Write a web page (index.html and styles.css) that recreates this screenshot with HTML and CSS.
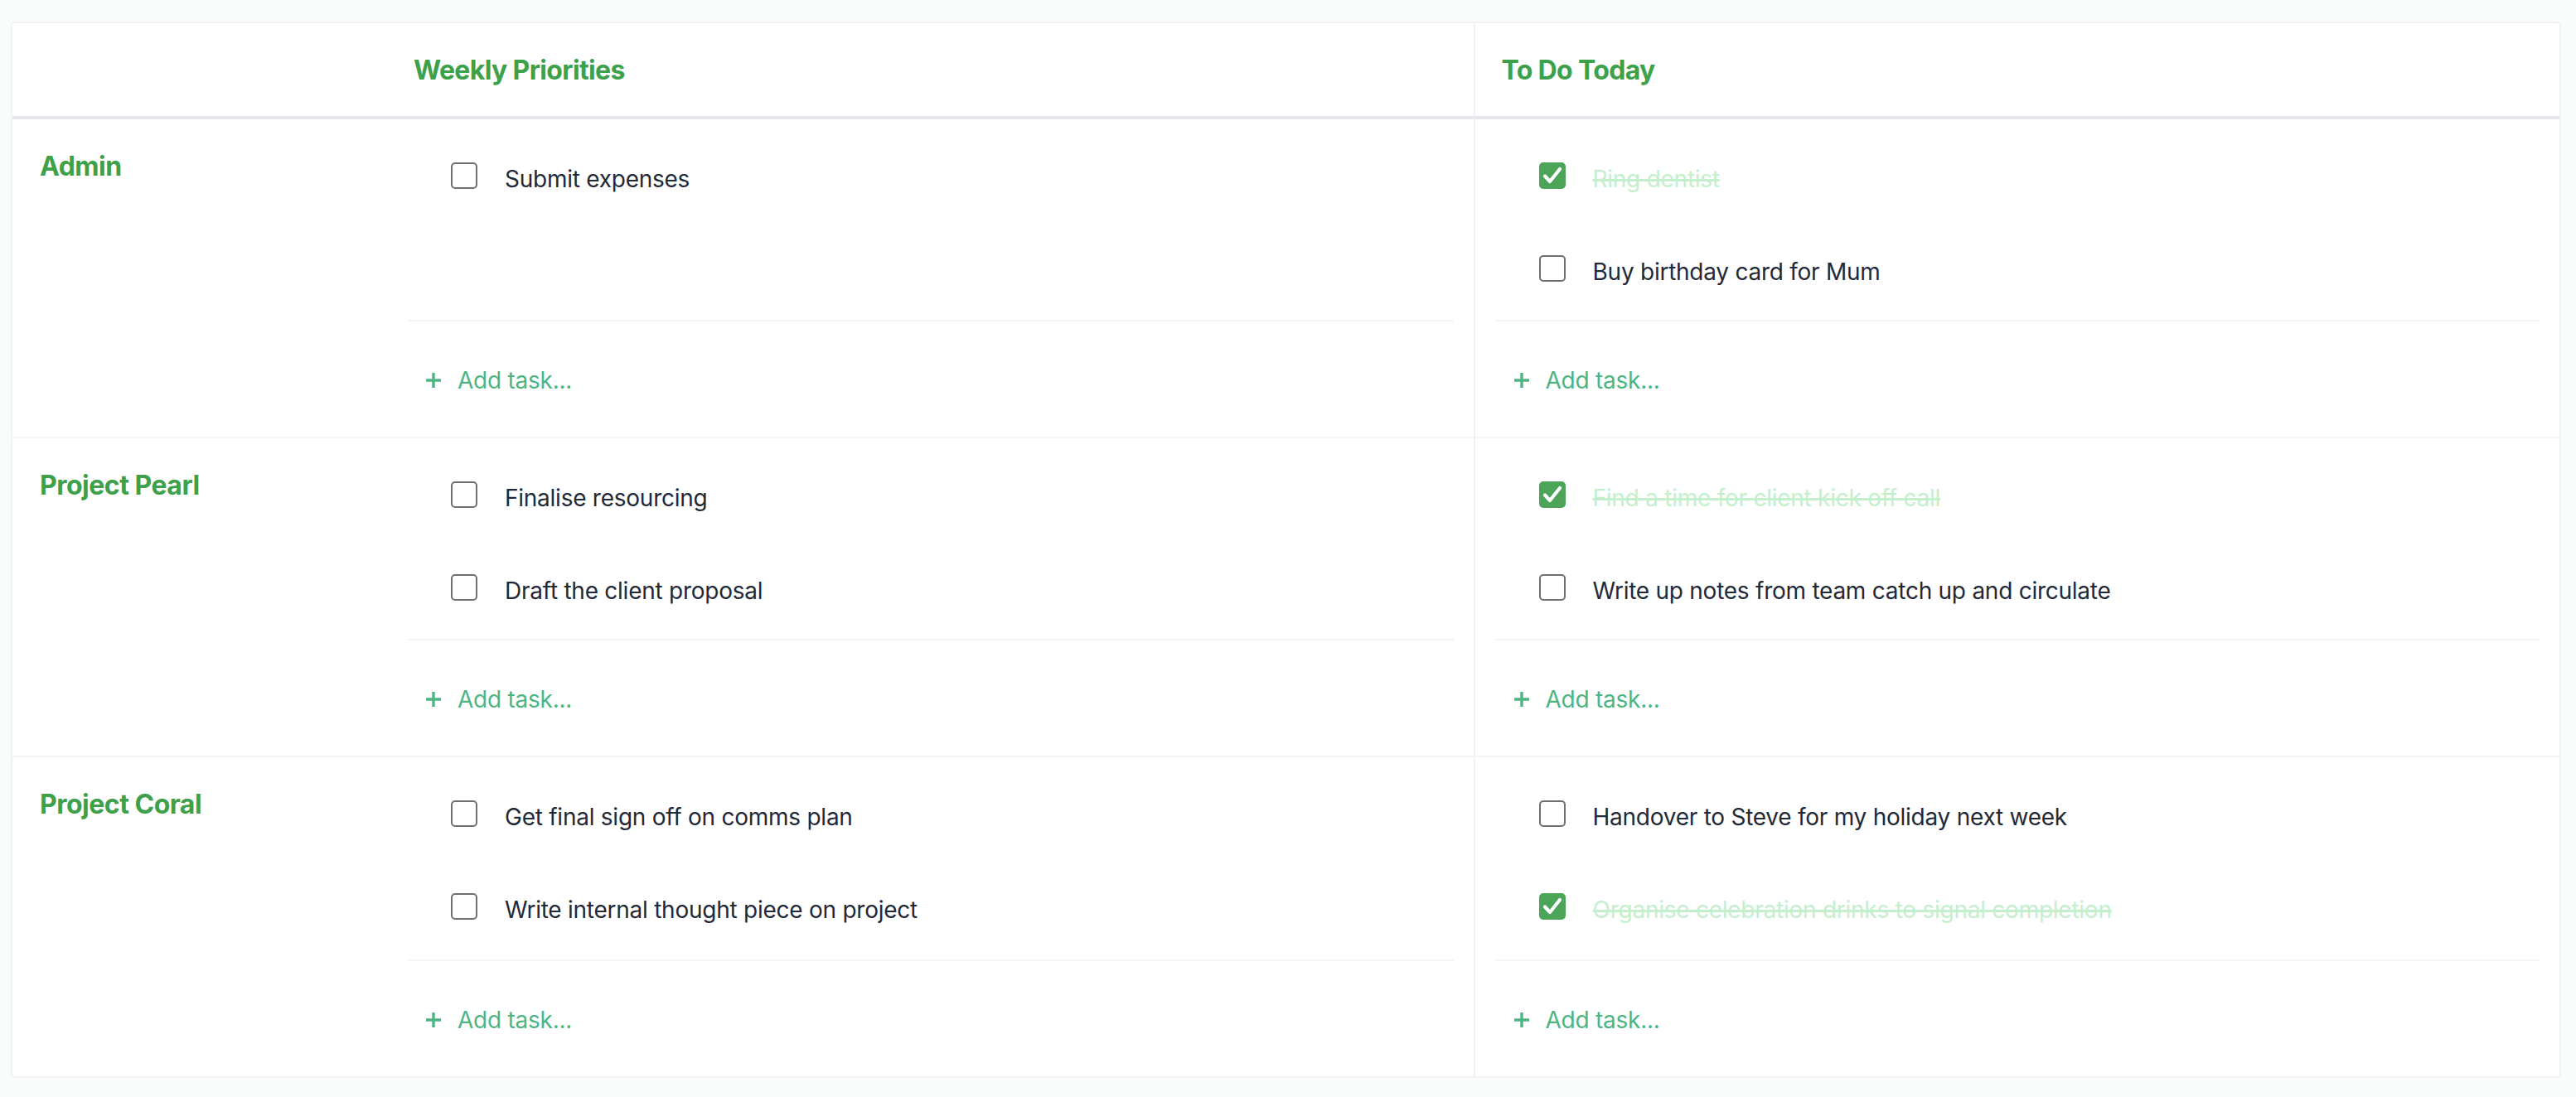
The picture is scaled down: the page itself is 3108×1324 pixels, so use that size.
FILE: index.html
```html
<!DOCTYPE html>
<html lang="en">
<head>
<meta charset="utf-8">
<title>Weekly planner</title>
<link rel="stylesheet" href="styles.css">
</head>
<body>
<div class="board">
  <div class="grid">
    <div class="head head-label"></div>
    <div class="head">Weekly Priorities</div>
    <div class="head col-today">To Do Today</div>

    <!-- Admin -->
    <div class="label">Admin</div>
    <div class="cell">
      <ul class="tasks">
        <li class="task"><span class="box"></span><span class="txt">Submit expenses</span></li>
      </ul>
      <div class="add"><svg class="plus" viewBox="0 0 20 20"><path d="M10 1v18M1 10h18"/></svg><span>Add task...</span></div>
    </div>
    <div class="cell col-today">
      <ul class="tasks">
        <li class="task done"><span class="box"><svg viewBox="0 0 32 32"><path d="M7 16.5l6 6.5L25 8"/></svg></span><span class="txt">Ring dentist</span></li>
        <li class="task"><span class="box"></span><span class="txt">Buy birthday card for Mum</span></li>
      </ul>
      <div class="add"><svg class="plus" viewBox="0 0 20 20"><path d="M10 1v18M1 10h18"/></svg><span>Add task...</span></div>
    </div>

    <!-- Project Pearl -->
    <div class="label">Project Pearl</div>
    <div class="cell">
      <ul class="tasks">
        <li class="task"><span class="box"></span><span class="txt">Finalise resourcing</span></li>
        <li class="task"><span class="box"></span><span class="txt">Draft the client proposal</span></li>
      </ul>
      <div class="add"><svg class="plus" viewBox="0 0 20 20"><path d="M10 1v18M1 10h18"/></svg><span>Add task...</span></div>
    </div>
    <div class="cell col-today">
      <ul class="tasks">
        <li class="task done"><span class="box"><svg viewBox="0 0 32 32"><path d="M7 16.5l6 6.5L25 8"/></svg></span><span class="txt">Find a time for client kick off call</span></li>
        <li class="task"><span class="box"></span><span class="txt">Write up notes from team catch up and circulate</span></li>
      </ul>
      <div class="add"><svg class="plus" viewBox="0 0 20 20"><path d="M10 1v18M1 10h18"/></svg><span>Add task...</span></div>
    </div>

    <!-- Project Coral -->
    <div class="label last">Project Coral</div>
    <div class="cell last">
      <ul class="tasks">
        <li class="task"><span class="box"></span><span class="txt">Get final sign off on comms plan</span></li>
        <li class="task"><span class="box"></span><span class="txt">Write internal thought piece on project</span></li>
      </ul>
      <div class="add"><svg class="plus" viewBox="0 0 20 20"><path d="M10 1v18M1 10h18"/></svg><span>Add task...</span></div>
    </div>
    <div class="cell col-today last">
      <ul class="tasks">
        <li class="task"><span class="box"></span><span class="txt">Handover to Steve for my holiday next week</span></li>
        <li class="task done"><span class="box"><svg viewBox="0 0 32 32"><path d="M7 16.5l6 6.5L25 8"/></svg></span><span class="txt">Organise celebration drinks to signal completion</span></li>
      </ul>
      <div class="add"><svg class="plus" viewBox="0 0 20 20"><path d="M10 1v18M1 10h18"/></svg><span>Add task...</span></div>
    </div>
  </div>
</div>
</body>
</html>
```

FILE: styles.css
```css
html, body {
  margin: 0;
  padding: 0;
  background: #fafbfb;
}

body {
  font-family: Inter, "Noto Sans", "Liberation Sans", sans-serif;
  padding: 26px 18px 0 13px;
}

.board {
  width: 3073px;
  background: #ffffff;
  border: 2px solid #f1f3f2;
  border-radius: 4px;
}

.grid {
  display: grid;
  grid-template-columns: 452px 1fr 1fr;
}

.head {
  height: 112px;
  display: flex;
  align-items: center;
  padding-left: 32px;
  font-size: 32px;
  font-weight: 700;
  color: #3ca14a;
  border-bottom: 4px solid #e5e7eb;
  letter-spacing: -0.65px;
}

.col-today {
  border-left: 2px solid #f1f1f3;
}

.label {
  height: 385px;
  box-sizing: border-box;
  padding: 37px 0 0 33px;
  font-size: 32px;
  line-height: 40px;
  font-weight: 700;
  color: #3ca14a;
  border-bottom: 2px solid #f3f4f6;
  letter-spacing: -0.5px;
}

.cell {
  height: 385px;
  box-sizing: border-box;
  padding: 12px 24px 0;
  display: flex;
  flex-direction: column;
  border-bottom: 2px solid #f3f4f6;
}

.last {
  border-bottom: none;
}

.tasks {
  list-style: none;
  margin: 0 0 6px;
  padding: 0;
  flex: 1;
}

.task {
  height: 112px;
  display: flex;
  align-items: center;
  padding-left: 53px;
}

.box {
  width: 32px;
  height: 32px;
  box-sizing: border-box;
  border: 2.5px solid #6f6f6f;
  border-radius: 5px;
  flex: none;
  display: flex;
  align-items: center;
  justify-content: center;
}

.task.done .box {
  background: #4ba457;
  border-color: #4ba457;
}

.box svg {
  width: 32px;
  height: 32px;
  flex: none;
}

.box svg path {
  fill: none;
  stroke: #ffffff;
  stroke-width: 4.2;
  stroke-linecap: round;
  stroke-linejoin: round;
}

.txt {
  margin-left: 33px;
  padding-top: 8px;
  font-size: 28px;
  color: #1f2937;
  letter-spacing: -0.25px;
}

.task.done .txt {
  color: #c4efcd;
  text-decoration: line-through;
  text-decoration-thickness: 3px;
}

.add {
  height: 141px;
  border-top: 2px solid #f4f5f6;
  display: flex;
  align-items: center;
  padding-left: 22px;
  padding-top: 2px;
  box-sizing: border-box;
  color: #4db584;
  font-size: 28px;
  letter-spacing: -0.25px;
}

.plus {
  width: 20px;
  height: 20px;
  margin-right: 19px;
  flex: none;
}

.plus path {
  stroke: #4db584;
  stroke-width: 3.4;
  fill: none;
}
```
